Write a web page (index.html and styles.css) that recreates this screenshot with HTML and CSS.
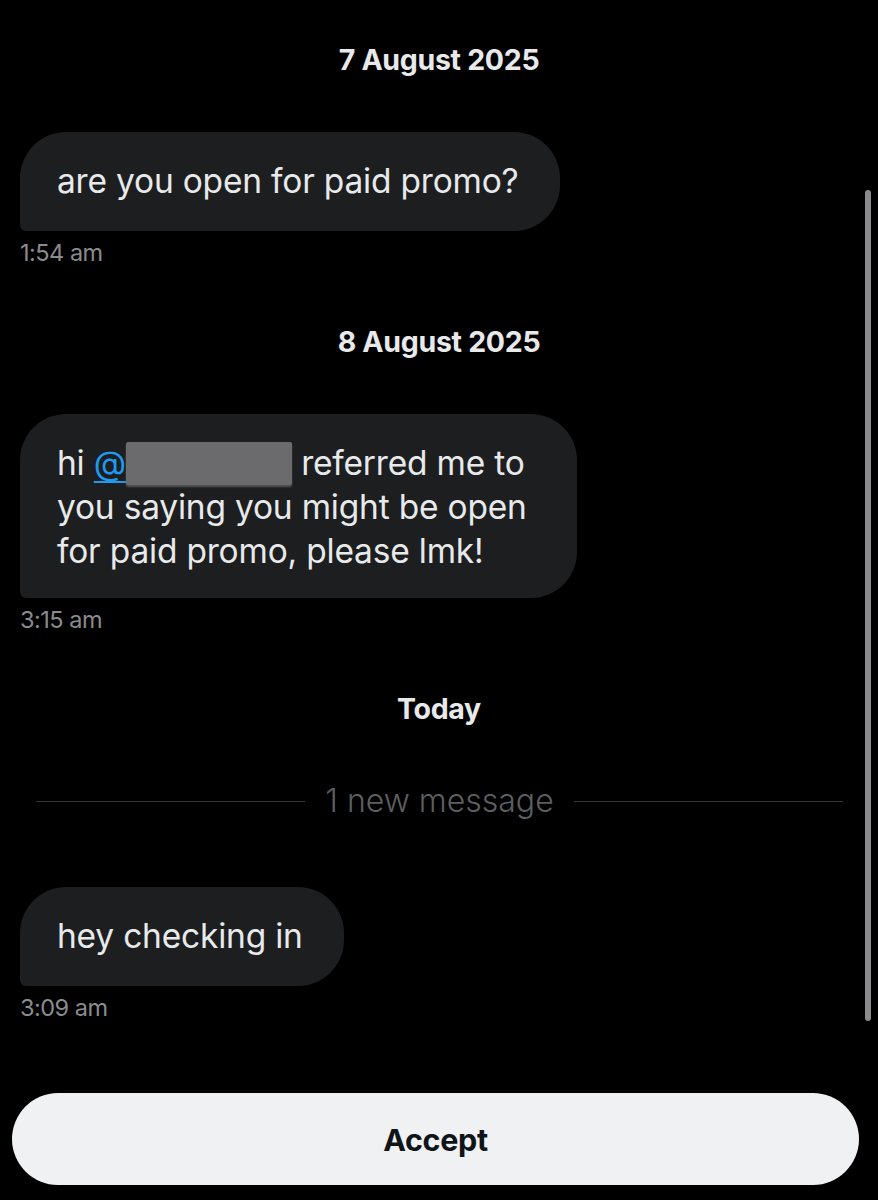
FILE: index.html
```html
<!DOCTYPE html>
<html lang="en">
<head>
<meta charset="utf-8">
<title>Message request</title>
<link rel="stylesheet" href="styles.css">
</head>
<body>
<div class="screen">
  <main class="thread">
    <div class="date date-first">7 August 2025</div>
    <div class="msg">
      <div class="bubble">are you open for paid promo?</div>
      <div class="time">1:54 am</div>
    </div>

    <div class="date">8 August 2025</div>
    <div class="msg">
      <div class="bubble bubble-wide">hi <span class="mention">@</span><span class="redact"></span> referred me to you saying you might be open for paid promo, please lmk!</div>
      <div class="time">3:15 am</div>
    </div>

    <div class="date date-today">Today</div>
    <div class="divider"><span class="divider-text">1 new message</span></div>
    <div class="msg msg-last">
      <div class="bubble">hey checking in</div>
      <div class="time">3:09 am</div>
    </div>
  </main>
  <div class="actions">
    <button class="accept">Accept</button>
  </div>
  <div class="scrollbar"></div>
</div>
</body>
</html>
```

FILE: styles.css
```css
* { box-sizing: border-box; }
html, body {
  margin: 0;
  padding: 0;
  background: #000;
}
body {
  font-family: Inter, "Noto Sans", "Liberation Sans", sans-serif;
  color: #e7e9ea;
  width: 878px;
  height: 1200px;
  overflow: hidden;
}
.screen {
  position: relative;
  height: 1200px;
  display: flex;
  flex-direction: column;
}
.thread {
  display: flex;
  flex-direction: column;
  padding: 0 20px;
}
.date {
  text-align: center;
  font-weight: 700;
  font-size: 28.5px;
  line-height: 34px;
  color: #e7e9ea;
  margin-top: 59px;
  letter-spacing: -0.3px;
}
.date-first { margin-top: 43px; }
.date-today { margin-top: 59px; }
.msg {
  display: flex;
  flex-direction: column;
  align-items: flex-start;
  margin-top: 55px;
}
.bubble {
  background: #1d1e20;
  border-radius: 46px 46px 46px 6px;
  padding: 27px 41px 28px 37px;
  font-size: 33.5px;
  line-height: 44px;
  max-width: 557px;
  color: #e7e9ea;
  letter-spacing: -0.2px;
}
.bubble-wide {
  padding-right: 26px;
  padding-bottom: 25px;
}
.mention {
  color: #1d9bf0;
  text-decoration: underline;
  text-decoration-thickness: 2px;
  text-underline-offset: 6px;
}
.redact {
  display: inline-block;
  width: 166px;
  height: 43px;
  vertical-align: -10px;
  background: #6b6b6e;
  border-radius: 2px;
  box-shadow: 0 2px 2px rgba(140,140,145,0.5);
}
.time {
  margin-top: 9px;
  font-size: 23.5px;
  line-height: 26px;
  color: #8b8b8e;
  letter-spacing: -0.5px;
}
.divider {
  display: flex;
  align-items: center;
  gap: 20px;
  margin: 55px 15px 0 16px;
}
.divider::before,
.divider::after {
  content: "";
  flex: 1;
  height: 1px;
  background: #333437;
}
.divider-text {
  font-size: 32px;
  line-height: 40px;
  font-weight: 300;
  color: #5d5e61;
}
.msg-last { margin-top: 66px; }
.actions {
  margin-top: 72px;
  padding: 0 19px 0 12px;
}
.accept {
  display: block;
  width: 100%;
  height: 92px;
  border: 0;
  border-radius: 46px;
  background: #eff1f3;
  color: #0f1419;
  font-family: Inter, "Noto Sans", "Liberation Sans", sans-serif;
  font-weight: 700;
  font-size: 30.5px;
  letter-spacing: -0.3px;
}
.scrollbar {
  position: absolute;
  left: 865px;
  top: 190px;
  width: 6px;
  height: 831px;
  border-radius: 3px;
  background: #8a8a8c;
}
```
